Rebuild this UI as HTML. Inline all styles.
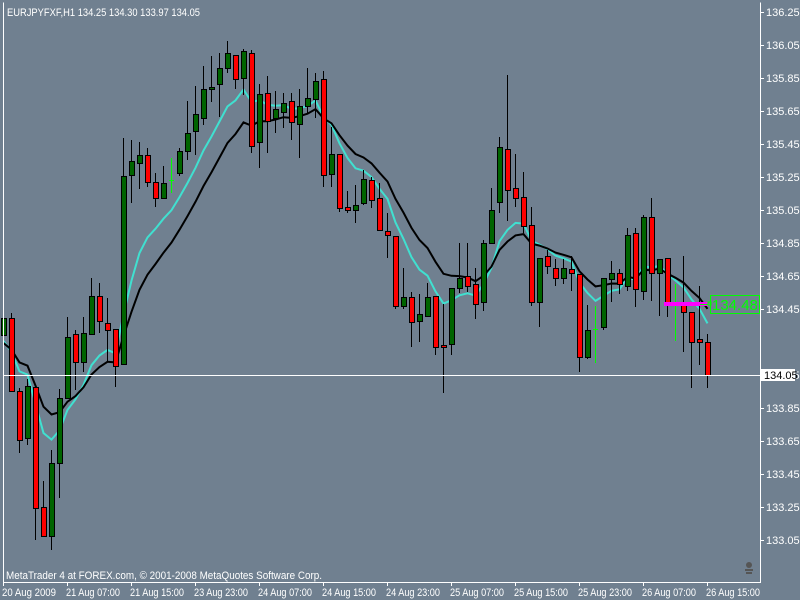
<!DOCTYPE html>
<html><head><meta charset="utf-8"><style>
html,body{margin:0;padding:0;width:800px;height:600px;overflow:hidden;background:#708090}
svg{display:block}
text{font-family:"Liberation Sans",sans-serif;font-size:11px;fill:#fff}
</style></head><body>
<svg id="s" width="800" height="600" xmlns="http://www.w3.org/2000/svg">
<rect width="800" height="600" fill="#708090"/>
<g id="ma"></g>
<g id="c"></g>
<line x1="3" y1="375.5" x2="760" y2="375.5" stroke="#fff" stroke-width="1"/>
<path d="M3.5 2.5V582.5H760.5V2.5" fill="none" stroke="#fff" stroke-width="1"/>
<g id="ax"></g>
<text x="7" y="16" textLength="193" lengthAdjust="spacingAndGlyphs">EURJPYFXF,H1  134.25 134.30 133.97 134.05</text>
<text x="6" y="579" textLength="316" lengthAdjust="spacingAndGlyphs">MetaTrader 4 at FOREX.com, © 2001-2008 MetaQuotes Software Corp.</text>
<rect x="664" y="302" width="44" height="4" fill="#f0f"/>
<line x1="700" y1="304.5" x2="708" y2="304.5" stroke="#0f0"/>
<rect x="708" y="302" width="3" height="3" fill="none" stroke="#0f0"/>
<rect x="710.5" y="295.5" width="49" height="18" fill="none" stroke="#0f0"/>
<text x="712" y="310" style="font-size:15px;fill:#0f0">134.48</text>
<rect x="761" y="369" width="34" height="12" fill="#fff"/>
<text x="764" y="379" style="fill:#000">134.05</text>
<g fill="#555"><circle cx="749" cy="565" r="3"/><rect x="745" y="569" width="8" height="2"/><rect x="746" y="572" width="6" height="2"/></g>
</svg>
<script>
var D=[
['G',318,335,293,340],['R',318,391,313,391],['R',391,440,388,453],['G',386,438,379,445],['R',387,508,387,540],['R',507,536,481,536],['G',463,536,450,550],['G',398,463,389,498],['G',337,398,317,398],['R',334,362,330,390],
['G',333,362,317,372],['G',296,334,278,334],['R',296,321,283,333],['R',323,330,298,362],['R',329,366,329,387],['G',176,364,138,364],['G',161,175,140,203],['G',155,163,142,189],['R',155,182,148,187],['R',182,198,173,207],
['G',183,198,166,198],['D',180,180,158,193],['G',151,173,148,176],['G',133,151,101,160],['G',114,131,86,155],['G',89,118,66,125],['G',87,89,56,102],['G',68,84,53,117],['G',53,68,41,73],['R',55,79,55,89],
['G',51,78,49,95],['R',53,146,50,153],['G',94,142,84,168],['R',93,121,76,153],['G',109,118,91,133],['G',103,112,93,128],['R',101,122,93,140],['G',106,124,89,158],['G',98,106,68,114],['G',81,99,73,118],
['R',79,175,71,187],['G',154,174,127,187],['R',154,208,154,212],['R',207,210,191,213],['G',205,210,185,223],['G',179,203,170,205],['R',180,200,177,208],['R',198,230,183,231],['R',231,235,213,258],['R',236,306,236,309],
['G',297,306,268,309],['R',297,322,292,347],['G',314,321,294,342],['G',297,316,283,317],['R',296,347,296,355],['R',345,347,304,393],['G',288,344,288,355],['G',278,288,243,293],['R',276,286,243,292],['R',284,304,268,319],
['G',243,302,240,311],['G',210,243,188,243],['G',147,202,137,213],['R',149,190,75,221],['R',188,198,154,207],['R',197,226,172,233],['R',225,302,207,306],['G',258,302,258,327],['R',256,266,250,274],['R',268,278,259,286],
['G',268,278,259,284],['R',269,273,256,291],['R',274,357,274,372],['G',330,357,305,359],['D',329,329,306,363],['G',278,327,278,330],['G',273,279,261,302],['R',273,284,269,294],['G',235,286,228,291],['R',233,289,228,307],
['G',217,291,215,300],['R',217,273,198,301],['G',259,273,259,316],['R',258,304,258,317],['D',303,303,284,341],['R',304,312,256,352],['R',312,342,312,388],['R',339,342,286,365],['R',342,375,334,388]];
var c=document.getElementById('c'),h='';
var cy=[],bk=[],e1=341,e2=343;
D.forEach(function(d,k){
 var x=3+8*k;
 var close=d[0]=='G'?d[1]:d[2];
 if(d[0]=='D'){
  h+='<line x1="'+(x+.5)+'" y1="'+d[3]+'" x2="'+(x+.5)+'" y2="'+d[4]+'" stroke="#0f0"/><line x1="'+(x-2)+'" y1="'+(d[1]+.5)+'" x2="'+(x+3)+'" y2="'+(d[1]+.5)+'" stroke="#0f0"/>';
 }else{
  h+='<line x1="'+(x+.5)+'" y1="'+d[3]+'" x2="'+(x+.5)+'" y2="'+d[4]+'" stroke="#000"/>';
  h+='<rect x="'+(x-1.5)+'" y="'+(d[1]+.5)+'" width="5" height="'+Math.max(2,d[2]-d[1])+'" fill="'+(d[0]=='G'?'#006400':'#f00')+'" stroke="#000"/>';
 }
 if(k>0){e1=e1+0.22*(close-e1);e2=e2+0.14*(close-e2);}
 cy.push((x+.5)+','+e1.toFixed(1));bk.push((x+.5)+','+e2.toFixed(1));
});
c.innerHTML=h;
document.getElementById('ma').innerHTML='<polyline points="'+cy.join(' ')+'" fill="none" stroke="#40e0d0" stroke-width="2"/><polyline points="'+bk.join(' ')+'" fill="none" stroke="#000" stroke-width="2"/>';
var a='',p=136.25;
for(var i=0;i<17;i++){var y=12+33*i;if(i!=10){a+='<line x1="760" y1="'+(y+.5)+'" x2="764" y2="'+(y+.5)+'" stroke="#fff"/><text x="766" y="'+(y+4)+'">'+(p-0.2*i).toFixed(2)+'</text>';}}
var L=['20 Aug 2009','21 Aug 07:00','21 Aug 15:00','23 Aug 23:00','24 Aug 07:00','24 Aug 15:00','24 Aug 23:00','25 Aug 07:00','25 Aug 15:00','25 Aug 23:00','26 Aug 07:00','26 Aug 15:00'];
L.forEach(function(t,i){var x=3+64*i;a+='<line x1="'+(x+.5)+'" y1="582" x2="'+(x+.5)+'" y2="586" stroke="#fff"/><text x="'+(x-1)+'" y="596" textLength="54" lengthAdjust="spacingAndGlyphs">'+t+'</text>';});
document.getElementById('ax').innerHTML=a;
</script>
</body></html>
